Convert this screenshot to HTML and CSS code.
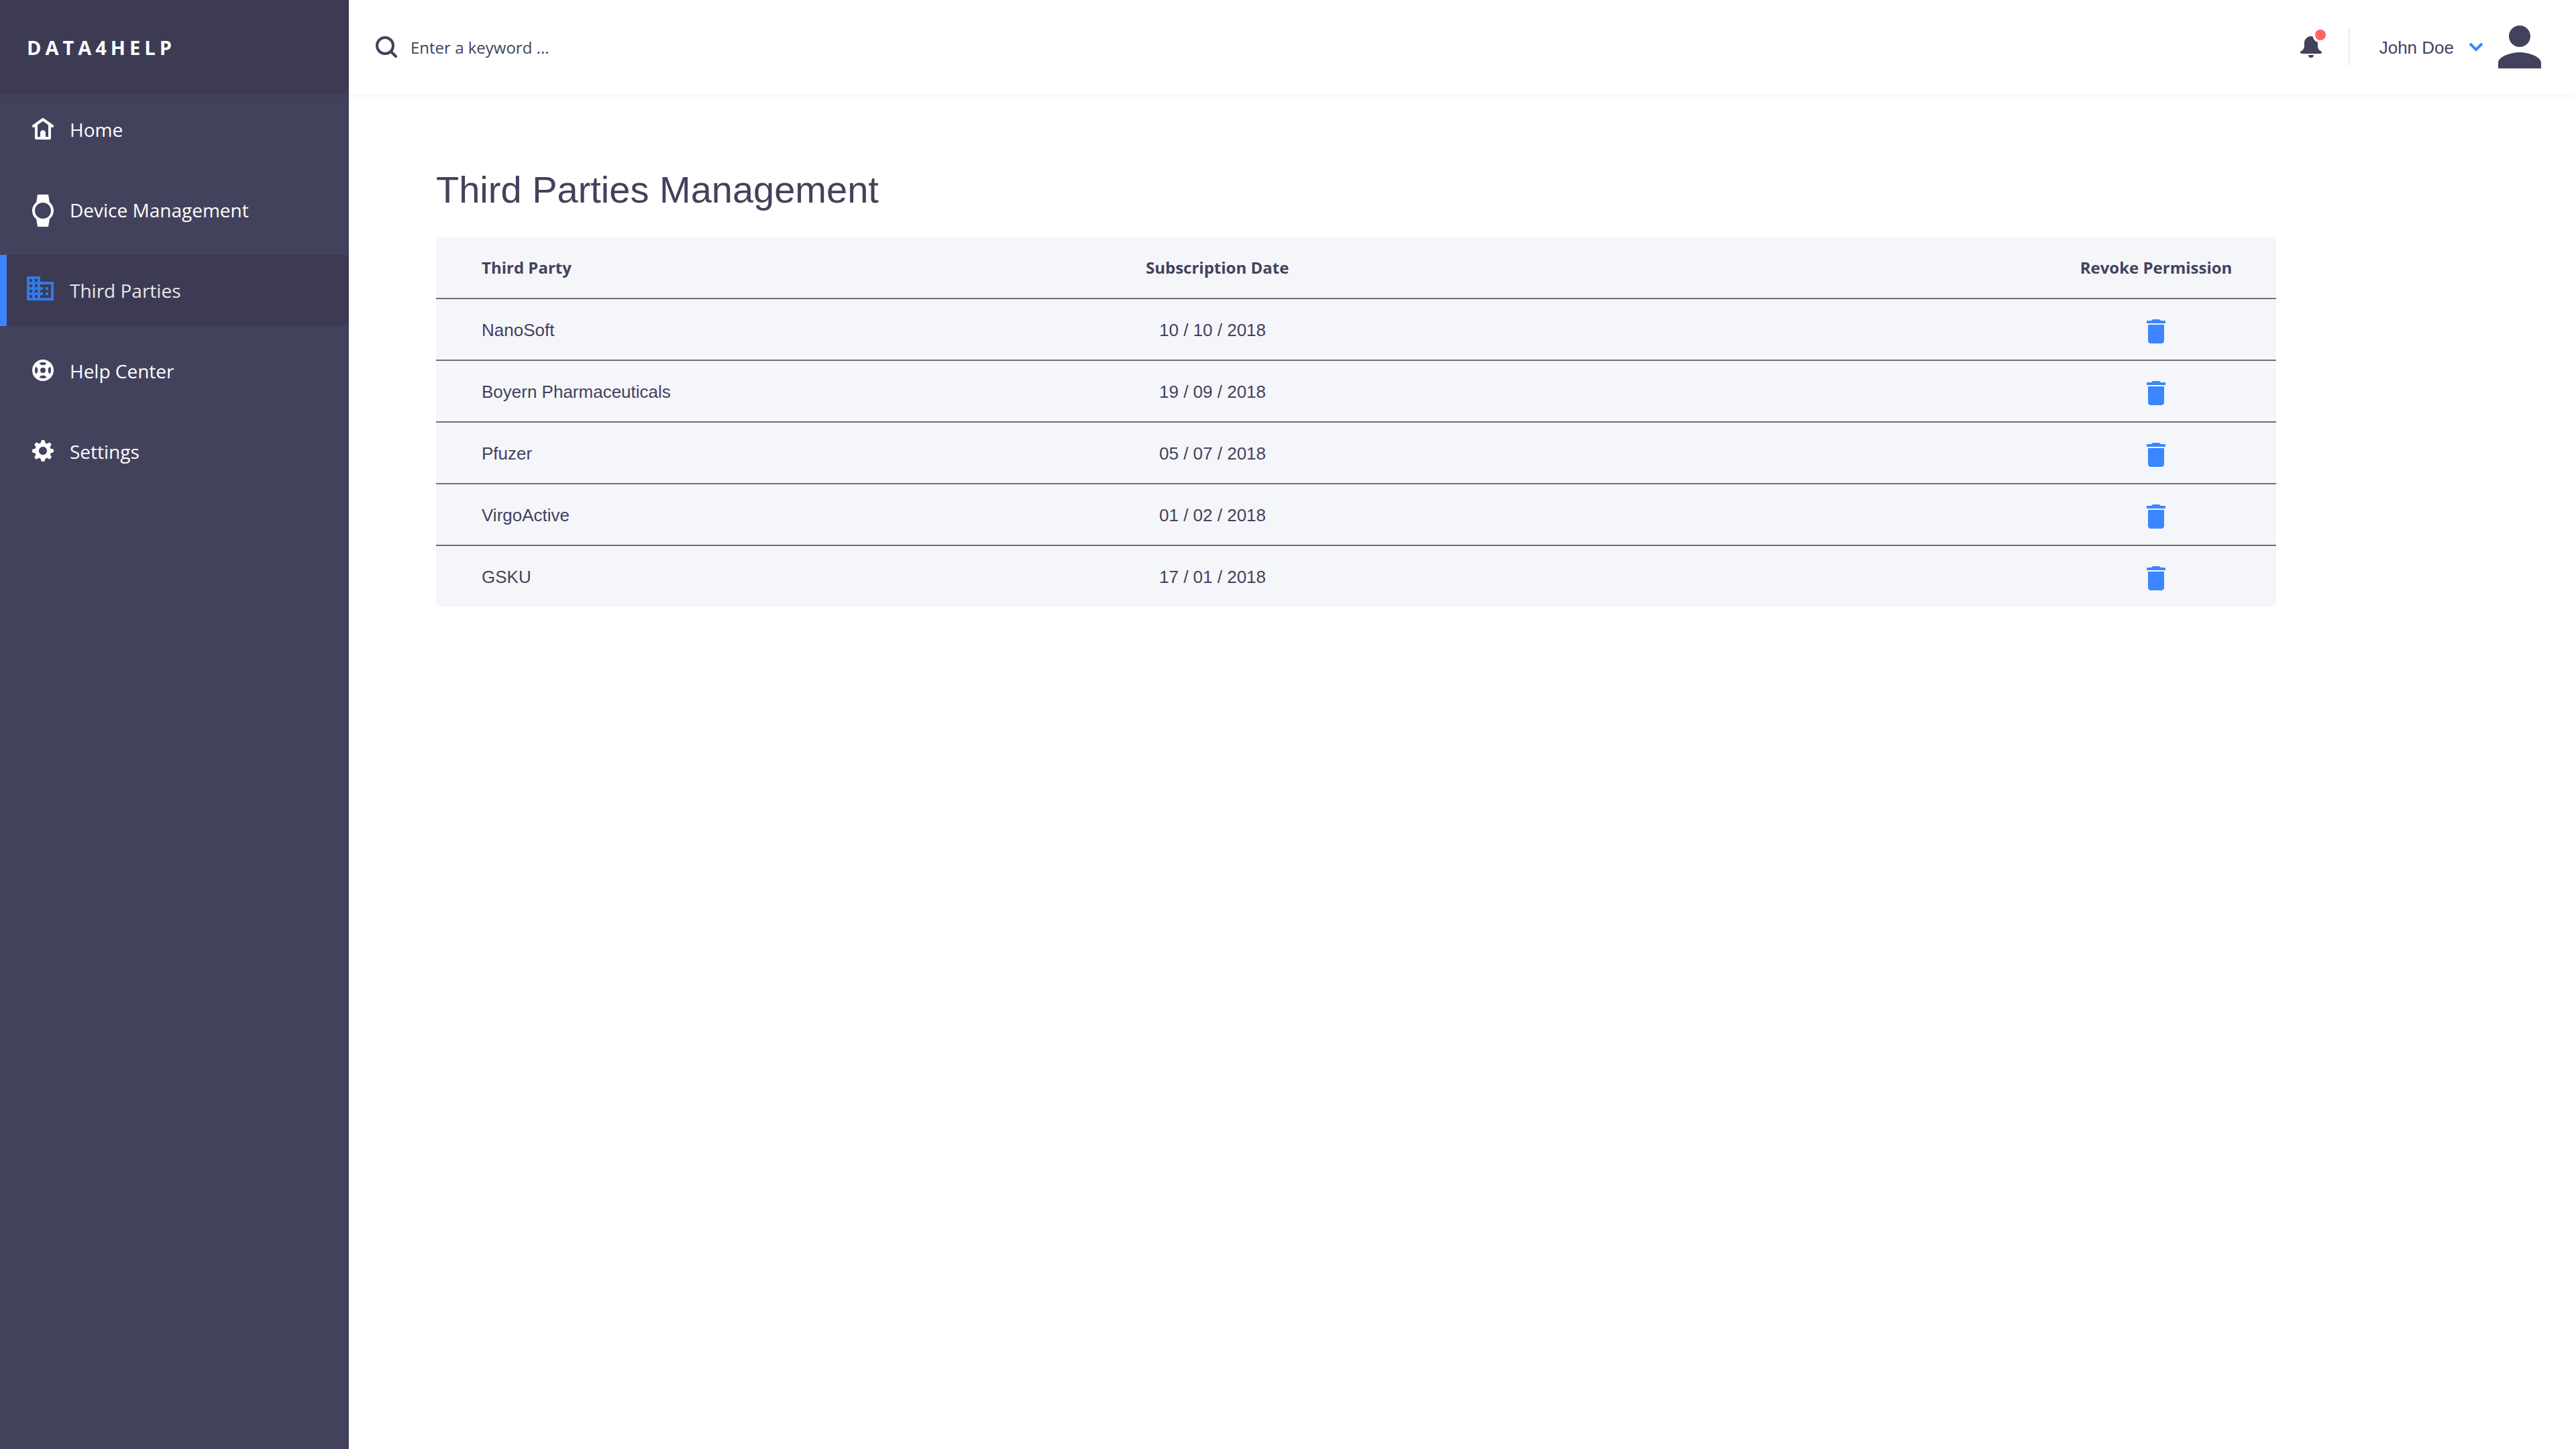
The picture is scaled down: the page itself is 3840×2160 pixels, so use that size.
FILE: index.html
```html
<!DOCTYPE html>
<html lang="en">
<head>
<meta charset="utf-8">
<title>Data4Help - Third Parties</title>
<link rel="stylesheet" href="styles.css">
</head>
<body>
<svg class="sprite" aria-hidden="true">
  <symbol id="trash" viewBox="0 0 24 24"><path d="M6 19c0 1.1.9 2 2 2h8c1.1 0 2-.9 2-2V7H6v12zM19 4h-3.500l-1-1h-5l-1 1H5v2h14V4z"/></symbol>
</svg>
<div class="app">
  <header class="topbar">
    <div class="brand">DATA4HELP</div>
    <label class="search">
      <svg class="icon" viewBox="0 0 16 16" aria-hidden="true"><path d="M12.7,11.23A6.777,6.777,0,0,0,14,7,7,7,0,1,0,7,14a6.777,6.777,0,0,0,4.23-1.3l3.029,3.029a1.009,1.009,0,0,0,1.471-1.471ZM7,12a4.950,4.950,0,0,1-5-5A4.950,4.950,0,0,1,7,2a4.950,4.950,0,0,1,5,5A4.950,4.950,0,0,1,7,12Z"/></svg>
      <input class="search-input" type="search" placeholder="Enter a keyword ..." aria-label="Search">
    </label>
    <button class="bell" type="button" aria-label="Notifications">
      <svg class="icon" viewBox="0 0 32 32" aria-hidden="true"><path d="M16 0C10.500 0 6 4.500 6 10v4c0 4-2 7-4.500 8Q0 22.500 0 24q0 2 2 2h28q2 0 2-2 0-1.500-1.500-2C28 21 26 18 26 14V9.200A12 12 0 0 1 18.700.4Q17.500 0 16 0zM12 28h8a4 4 0 0 1-8 0z"/></svg>
      <span class="dot"></span>
    </button>
    <button class="user" type="button">
      <span class="user-name">John Doe</span>
      <svg class="chevron" viewBox="0 0 22 14" aria-hidden="true"><path d="M2 2l9 9 9-9"/></svg>
      <svg class="avatar" viewBox="4 4 16 16" aria-hidden="true"><path d="M12 12c2.210 0 4-1.790 4-4s-1.790-4-4-4-4 1.790-4 4 1.790 4 4 4zm0 2c-2.670 0-8 1.340-8 4v2h16v-2c0-2.660-5.330-4-8-4z"/></svg>
    </button>
  </header>
  <nav class="sidebar" aria-label="Main">
    <a class="nav-item" href="#home">
      <span class="nav-icon"><svg class="icon" viewBox="0 0 16 16" aria-hidden="true"><path d="M15.581,5.186l-7-5C8.233-0.062,7.766-0.062,7.419,0.186l-7,5C-0.030,5.507-0.135,6.131,0.186,6.580c0.320,0.449,0.945,0.555,1.395,0.233L2,6.515V15c0,0.553,0.448,1,1,1h10c0.552,0,1-0.447,1-1V6.515l0.419,0.299C14.596,6.939,14.799,7,14.999,7c0.312,0,0.619-0.146,0.814-0.419C16.135,6.131,16.030,5.507,15.581,5.186zM12,14h-2v-3c0-1.105-0.895-2-2-2s-2,0.895-2,2v3H4V5.086l4-2.857l4,2.857V14z"/></svg></span>
      <span>Home</span>
    </a>
    <a class="nav-item" href="#devices">
      <span class="nav-icon"><svg class="icon-large" viewBox="0 0 24 24" aria-hidden="true"><path d="M20 12c0-2.540-1.190-4.810-3.040-6.270L16 0H8l-.95 5.730C5.190 7.190 4 9.450 4 12s1.190 4.810 3.050 6.270L8 24h8l.96-5.730C18.810 16.810 20 14.540 20 12zM6 12c0-3.310 2.690-6 6-6s6 2.690 6 6-2.690 6-6 6-6-2.690-6-6z"/></svg></span>
      <span>Device Management</span>
    </a>
    <a class="nav-item active" href="#third-parties" aria-current="page">
      <span class="nav-icon"><svg class="icon-large" viewBox="0 0 24 24" aria-hidden="true"><path d="M12 7V3H2v18h20V7H12zM6 19H4v-2h2v2zm0-4H4v-2h2v2zm0-4H4V9h2v2zm0-4H4V5h2v2zm4 12H8v-2h2v2zm0-4H8v-2h2v2zm0-4H8V9h2v2zm0-4H8V5h2v2zm10 12h-8v-2h2v-2h-2v-2h2v-2h-2V9h8v10zm-2-8h-2v2h2v-2zm0 4h-2v2h2v-2z"/></svg></span>
      <span>Third Parties</span>
    </a>
    <a class="nav-item" href="#help">
      <span class="nav-icon"><svg class="icon ring" viewBox="0 0 32 32" aria-hidden="true"><circle cx="16" cy="16" r="14" stroke-width="4"/><circle cx="16" cy="16" r="6" stroke-width="4"/><path stroke-width="7.400" d="M7 7l4 4M25 7l-4 4M7 25l4-4M25 25l-4-4"/></svg></span>
      <span>Help Center</span>
    </a>
    <a class="nav-item" href="#settings">
      <span class="nav-icon"><svg class="icon" viewBox="0 0 16 16" aria-hidden="true"><path d="M13.3,5.2l1.1-2.1L13,1.7l-2.1,1.1c-0.3-0.2-0.6-0.3-1-0.4L9.1,0H7L6.2,2.3c-0.3,0.1-0.6,0.2-0.9,0.4L3.2,1.6L1.6,3.2l1.1,2.1C2.6,5.6,2.4,5.9,2.3,6.2L0,7v2.1l2.3,0.8c0.1,0.4,0.3,0.7,0.4,1l-1.1,2.1L3,14.4l2.1-1.1c0.3,0.2,0.6,0.3,1,0.4L7,16h2.1l0.8-2.3c0.4-0.1,0.7-0.3,1-0.4l2.1,1.1l1.5-1.5l-1.1-2.1c0.2-0.3,0.3-0.6,0.4-1L16,9V7l-2.3-0.8C13.6,5.9,13.4,5.5,13.3,5.2zM8,11c-1.7,0-3-1.3-3-3s1.3-3,3-3s3,1.3,3,3S9.7,11,8,11z"/></svg></span>
      <span>Settings</span>
    </a>
  </nav>
  <main class="content">
    <h1 class="title">Third Parties Management</h1>
    <table class="parties">
      <colgroup><col class="col-name"><col><col class="col-action"></colgroup>
      <thead>
        <tr><th scope="col">Third Party</th><th scope="col">Subscription Date</th><th class="action" scope="col">Revoke Permission</th></tr>
      </thead>
      <tbody>
        <tr><td>NanoSoft</td><td class="date">10 / 10 / 2018</td><td class="action"><button class="revoke" type="button" aria-label="Revoke NanoSoft"><svg class="icon-large" aria-hidden="true"><use href="#trash"/></svg></button></td></tr>
        <tr><td>Boyern Pharmaceuticals</td><td class="date">19 / 09 / 2018</td><td class="action"><button class="revoke" type="button" aria-label="Revoke Boyern Pharmaceuticals"><svg class="icon-large" aria-hidden="true"><use href="#trash"/></svg></button></td></tr>
        <tr><td>Pfuzer</td><td class="date">05 / 07 / 2018</td><td class="action"><button class="revoke" type="button" aria-label="Revoke Pfuzer"><svg class="icon-large" aria-hidden="true"><use href="#trash"/></svg></button></td></tr>
        <tr><td>VirgoActive</td><td class="date">01 / 02 / 2018</td><td class="action"><button class="revoke" type="button" aria-label="Revoke VirgoActive"><svg class="icon-large" aria-hidden="true"><use href="#trash"/></svg></button></td></tr>
        <tr><td>GSKU</td><td class="date">17 / 01 / 2018</td><td class="action"><button class="revoke" type="button" aria-label="Revoke GSKU"><svg class="icon-large" aria-hidden="true"><use href="#trash"/></svg></button></td></tr>
      </tbody>
    </table>
  </main>
</div>
</body>
</html>
```
FILE: styles.css
```css
:root {
  --ink: #43425d;
  --ink-dark: #3c3b53;
  --blue: #3b86ff;
  --ui: "Open Sans", "Noto Sans", sans-serif;
  --text: "Liberation Sans", Arial, sans-serif;
}
* { box-sizing: border-box; }
body { margin: 0; background: #fff; color: var(--ink); font: 26px/32px var(--text); }
button { padding: 0; border: 0; background: none; color: inherit; font: inherit; cursor: pointer; }
svg { display: block; flex: none; fill: currentColor; }
.sprite { display: none; }
.icon { width: 32px; height: 32px; }
.icon-large { width: 48px; height: 48px; }

.app {
  display: grid;
  grid-template-columns: 520px 1fr;
  grid-template-rows: auto 1fr;
  min-height: 100vh;
}

.topbar {
  grid-column: 1 / -1;
  z-index: 1;
  display: flex;
  align-items: center;
  height: 140px;
  padding-right: 52px;
  background: #fff;
  box-shadow: 0 4px 12px rgba(0, 0, 0, 0.04);
}
.brand {
  display: flex;
  align-items: center;
  align-self: stretch;
  width: 520px;
  padding: 2px 0 0 40px;
  background: var(--ink-dark);
  color: #fff;
  font: 700 29px/40px var(--ui);
  letter-spacing: 6px;
}
.search { display: flex; flex: 1; align-items: center; gap: 20px; padding-left: 40px; }
.search-input {
  flex: 1;
  height: 60px;
  padding: 0;
  border: 0;
  outline: 0;
  background: none;
  color: var(--ink);
  font: 24px/34px var(--ui);
}
.search-input::placeholder { color: var(--ink); opacity: 1; }
.bell { position: relative; margin-right: 40px; }
.dot {
  position: absolute;
  top: -10px;
  right: -6px;
  width: 16px;
  height: 16px;
  border-radius: 50%;
  background: #ff6565;
}
.user {
  display: flex;
  align-items: center;
  height: 56px;
  padding-left: 44px;
  border-left: 2px solid #ebebf2;
}
.user-name { padding-top: 2px; }
.chevron { width: 22px; height: 14px; margin: 0 22px; fill: none; stroke: var(--blue); stroke-width: 4; }
.avatar { width: 64px; height: 64px; }

.sidebar { display: flex; flex-direction: column; gap: 14px; background: var(--ink); }
.nav-item {
  display: flex;
  align-items: center;
  height: 106px;
  color: #fff;
  font: 28px/40px var(--ui);
  text-decoration: none;
}
.nav-icon { display: flex; justify-content: center; width: 104px; padding-left: 24px; }
.nav-icon .icon { margin-bottom: 2px; }
.nav-icon .icon-large { margin-top: 2px; }
.ring { fill: none; stroke: currentColor; }
.active { border-left: 10px solid var(--blue); background: var(--ink-dark); color: #e6e6e8; }
.active .nav-icon { width: 94px; padding: 0 0 8px 6px; color: #3579e6; }

.content { padding: 111px 447px 80px 130px; }
.title { margin: 0 0 39px; font-size: 56px; font-weight: 400; line-height: 64px; }
.parties { width: 100%; table-layout: fixed; border-collapse: separate; border-spacing: 0; background: #f5f6fa; }
.col-name { width: 1058px; }
.col-action { width: 358px; }
.parties th,
.parties td { height: 92px; padding: 0; border-bottom: 2px solid #707070; text-align: left; }
.parties th { font: 700 24px/34px var(--ui); }
.parties td { padding-top: 2px; }
.parties tbody tr:last-child td { height: 90px; border-bottom: 0; }
.parties th:first-child,
.parties td:first-child { padding-left: 68px; }
.parties .date { padding-left: 20px; }
.parties .action { text-align: center; }
.revoke { display: block; margin: 4px auto 0; }
.revoke svg { color: var(--blue); }
```
